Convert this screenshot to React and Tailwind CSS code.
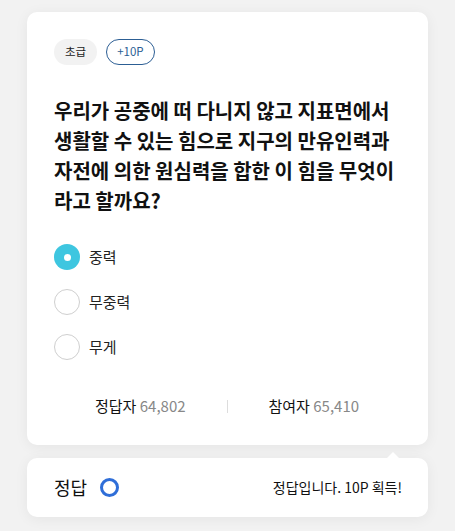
import React from 'react';

const font = { fontFamily: '"Noto Sans CJK KR", "Noto Sans", sans-serif' };

const options = [
    { label: '중력', checked: true },
    { label: '무중력', checked: false },
    { label: '무게', checked: false },
];

const questionLines = [
    '우리가 공중에 떠 다니지 않고 지표면에서',
    '생활할 수 있는 힘으로 지구의 만유인력과',
    '자전에 의한 원심력을 합한 이 힘을 무엇이',
    '라고 할까요?',
];

function Radio({ checked }) {
    if (checked) {
        return (
            <span className="w-[26px] h-[26px] rounded-full bg-[#3ec6e0] flex items-center justify-center shrink-0">
                <span className="w-[7px] h-[7px] rounded-full bg-white"></span>
            </span>
        );
    }
    return <span className="w-[26px] h-[26px] rounded-full border border-[#cfcfcf] bg-white shrink-0"></span>;
}

export default function App() {
    return (
        <div className="w-[455px] h-[531px] bg-[#f2f2f2] pt-[12px] px-[27px] overflow-hidden" style={font}>
            <div className="bg-white rounded-[10px] shadow-[0_2px_14px_rgba(0,0,0,0.06)] pl-[27px] pr-[16px] pt-[27px] pb-[27px]">
                <div className="flex gap-[9px]">
                    <span className="h-[26px] px-[11px] rounded-full bg-[#f2f2f2] text-[11.5px] text-[#222] flex items-center">초급</span>
                    <span className="h-[26px] px-[10px] rounded-full border border-[#2c5e94] text-[11.5px] text-[#2c5e94] flex items-center">+10P</span>
                </div>
                <p className="mt-[31px] text-[20px] font-bold leading-[30px] text-[#111] whitespace-nowrap">
                    {questionLines.map((line) => (
                        <span key={line} className="block">{line}</span>
                    ))}
                </p>
                <div className="mt-[28px] flex flex-col gap-[19px]">
                    {options.map((o) => (
                        <div key={o.label} className="flex items-center gap-[9px]">
                            <Radio checked={o.checked} />
                            <span className="text-[15px] text-[#222]">{o.label}</span>
                        </div>
                    ))}
                </div>
                <div className="mt-[35px] flex items-center text-[15px] pr-[12px]">
                    <div className="flex-1 text-center">
                        <span className="text-[#111]">정답자</span> <span className="text-[#888]">64,802</span>
                    </div>
                    <span className="w-px h-[13px] bg-[#ddd]"></span>
                    <div className="flex-1 text-center">
                        <span className="text-[#111]">참여자</span> <span className="text-[#888]">65,410</span>
                    </div>
                </div>
            </div>
            <div className="relative mt-[13px] bg-white rounded-[10px] shadow-[0_2px_14px_rgba(0,0,0,0.06)] h-[59px] pl-[27px] pr-[26px] flex items-center justify-between">
                <span className="absolute -top-[6px] right-[28px] w-0 h-0 border-l-[7px] border-r-[7px] border-b-[7px] border-l-transparent border-r-transparent border-b-white"></span>
                <div className="flex items-center gap-[13px]">
                    <span className="text-[18px] text-[#111]">정답</span>
                    <span className="w-[19px] h-[19px] rounded-full border-[3px] border-[#2f6ed8]"></span>
                </div>
                <span className="text-[14px] text-[#111]">정답입니다. 10P 획득!</span>
            </div>
        </div>
    );
}
